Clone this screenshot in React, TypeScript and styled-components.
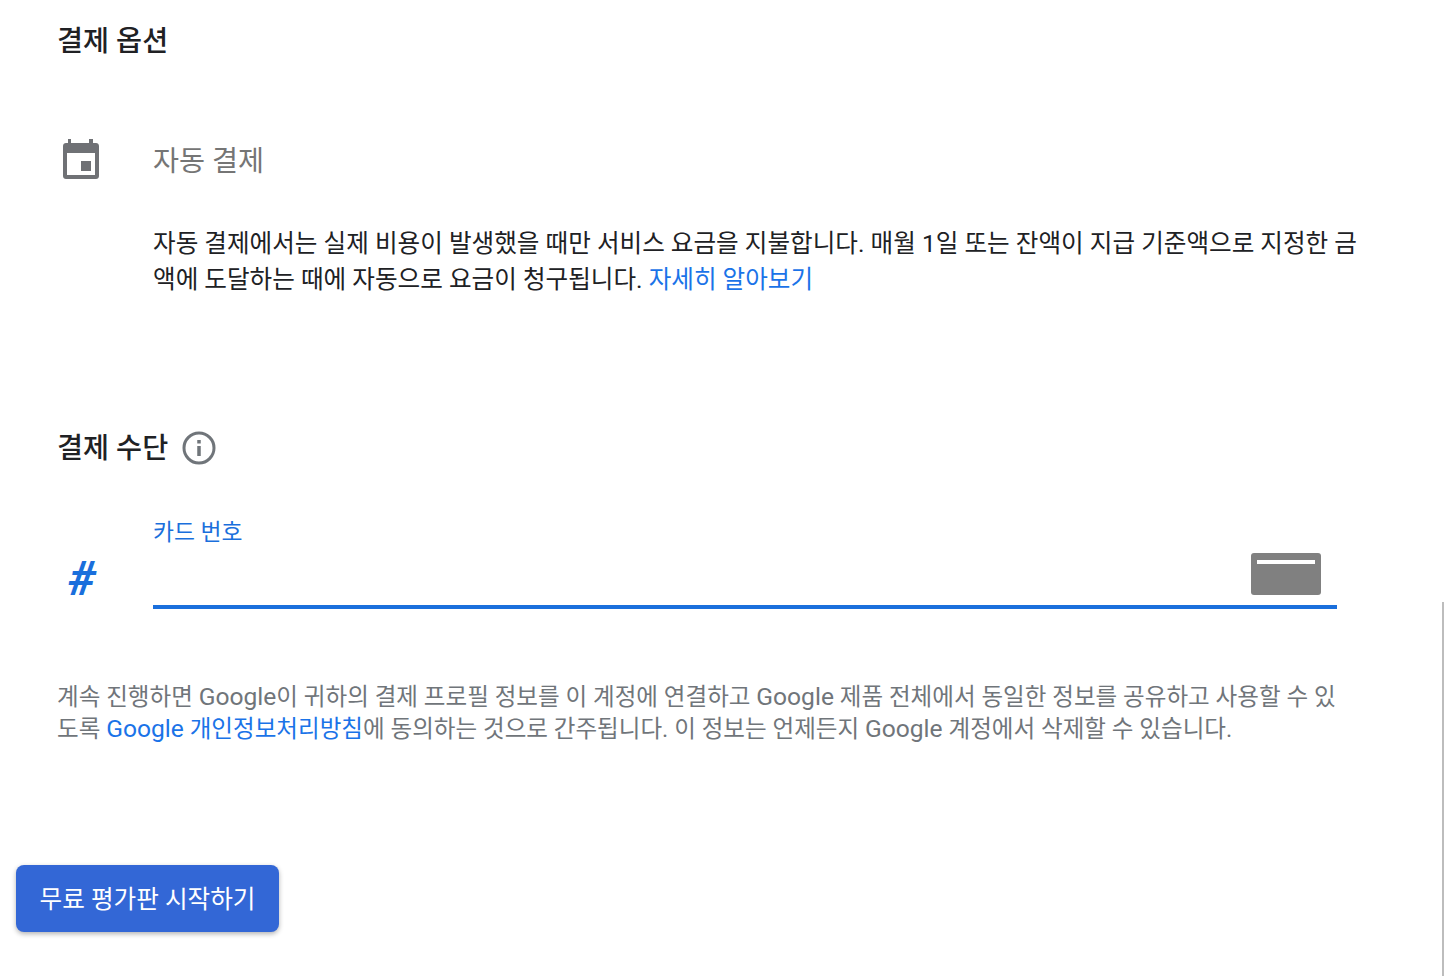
import styled, { createGlobalStyle } from "styled-components"

const GlobalStyle = createGlobalStyle`
	html, body {
		margin: 0;
		background: #fff;
	}
	body {
		font-family: "Roboto", "Noto Sans CJK KR", sans-serif;
		color: #202124;
	}
`

const App = () => {
	return (
		<Page>
			<GlobalStyle />
			<Title>결제 옵션</Title>
			<OptionRow>
				<IconCell>
					<svg width="36" height="40" viewBox="0 0 36 40" fill="#6f7175">
						<path
							fillRule="evenodd"
							d="M5 0h3v4h18V0h4v4h3c1.700 0 3 1.300 3 3v30c0 1.700-1.300 3-3 3H3c-1.700 0-3-1.300-3-3V7c0-1.700 1.300-3 3-3h2V0zM4 14v22h28V14H4z"
						/>
						<rect x="18" y="22" width="10" height="10" />
					</svg>
				</IconCell>
				<OptionLabel>자동 결제</OptionLabel>
			</OptionRow>
			<Description>
				자동 결제에서는 실제 비용이 발생했을 때만 서비스 요금을 지불합니다. 매월 1일 또는 잔액이 지급 기준액으로 지정한 금액에 도달하는 때에 자동으로 요금이 청구됩니다. <Link>자세히 알아보기</Link>
			</Description>
			<MethodTitle>
				결제 수단
				<InfoIcon width="34" height="34" viewBox="0 0 34 34" fill="none">
					<circle cx="17" cy="17" r="15" stroke="#70757a" strokeWidth="3" />
					<rect x="15.250" y="15" width="3.500" height="10" fill="#70757a" />
					<rect x="15.250" y="9" width="3.500" height="3.500" fill="#70757a" />
				</InfoIcon>
			</MethodTitle>
			<CardRow>
				<Hash>#</Hash>
				<CardField>
					<FieldLabel>카드 번호</FieldLabel>
					<FieldInput>
						<CardIcon />
					</FieldInput>
				</CardField>
			</CardRow>
			<Notice>
				계속 진행하면 <Brand>Google</Brand>이 귀하의 결제 프로필 정보를 이 계정에 연결하고 <Brand>Google</Brand> 제품 전체에서 동일한 정보를 공유하고 사용할 수 있도록 <Link><Brand>Google</Brand> 개인정보처리방침</Link>에 동의하는 것으로 간주됩니다. 이 정보는 언제든지 <Brand>Google</Brand> 계정에서 삭제할 수 있습니다.
			</Notice>
			<StartButton>무료 평가판 시작하기</StartButton>
			<ScrollThumb />
		</Page>
	)
}

export default App

const Page = styled.main`
	position: relative;
	box-sizing: border-box;
	width: 1444px;
	height: 976px;
	padding: 22px 0 0 57px;
	overflow: hidden;
`

const Title = styled.h2`
	margin: 0;
	font-size: 28.3px;
	line-height: 40px;
	font-weight: 500;
`

const OptionRow = styled.div`
	display: flex;
	align-items: flex-start;
	margin-top: 77px;
`

const IconCell = styled.div`
	display: flex;
	width: 96px;
	padding-left: 6px;
	box-sizing: border-box;
`

const OptionLabel = styled.div`
	font-size: 28.3px;
	line-height: 46px;
	color: #757575;
`

const Description = styled.p`
	width: 1210px;
	margin: 41px 0 0 96px;
	font-size: 24.6px;
	line-height: 36px;
	color: #202124;
`

const Link = styled.a`
	color: #1a73e8;
`

const MethodTitle = styled.h2`
	display: flex;
	align-items: center;
	gap: 14px;
	margin: 131px 0 0;
	font-size: 28.3px;
	line-height: 40px;
	font-weight: 500;
`

const InfoIcon = styled.svg`
	margin-bottom: 2px;
`

const CardRow = styled.div`
	display: flex;
	align-items: flex-end;
	margin-top: 49px;
`

const Hash = styled.div`
	width: 96px;
	padding: 0 0 2px 11px;
	box-sizing: border-box;
	font-family: "Roboto", sans-serif;
	font-size: 48px;
	line-height: 56px;
	font-style: italic;
	font-weight: 700;
	color: #1a6fdc;
`

const CardField = styled.div`
	width: 1184px;
`

const FieldLabel = styled.div`
	font-size: 22.8px;
	line-height: 30px;
	color: #1a6fdc;
`

const FieldInput = styled.div`
	display: flex;
	justify-content: flex-end;
	align-items: flex-start;
	box-sizing: border-box;
	height: 61px;
	padding: 5px 16px 0 0;
	border-bottom: 4px solid #1a6fdc;
`

const CardIcon = styled.div`
	box-sizing: border-box;
	width: 70px;
	height: 42px;
	padding: 7px 6px 0;
	border-radius: 3px;
	background: #808080;

	&::before {
		content: "";
		display: block;
		height: 4px;
		background: #fff;
	}
`

const Notice = styled.p`
	width: 1290px;
	margin: 72px 0 0;
	font-size: 23.56px;
	line-height: 32px;
	color: #70757a;
`

const Brand = styled.span`
	font-size: 24.6px;
	line-height: 1;
`

const StartButton = styled.button`
	position: absolute;
	left: 16px;
	top: 865px;
	width: 263px;
	height: 67px;
	padding: 0 0 4px;
	border: 0;
	border-radius: 8px;
	background: #3367d6;
	box-shadow: 0 2px 5px rgba(0, 0, 0, 0.3);
	color: #fff;
	font-family: inherit;
	font-size: 24.6px;
`

const ScrollThumb = styled.div`
	position: absolute;
	right: 0;
	top: 602px;
	bottom: 0;
	width: 2px;
	background: #bdbdbd;
`
